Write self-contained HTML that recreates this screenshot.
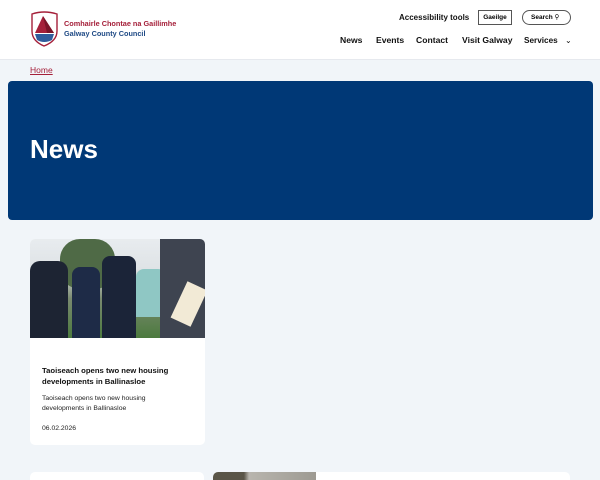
<!DOCTYPE html>
<html><head><meta charset="utf-8"><style>
*{margin:0;padding:0;box-sizing:border-box}
html,body{width:600px;height:480px;overflow:hidden}
body{background:#f1f5f9;font-family:"Liberation Sans",sans-serif;position:relative}
.hdr{position:absolute;left:0;top:0;width:600px;height:60px;background:#fff;border-bottom:1px solid #e6e9ee}
.abs{position:absolute;white-space:nowrap}
.nav{font-size:8.6px;color:#111;font-weight:bold;top:35px}
</style></head><body>
<div class="hdr">
<svg class="abs" style="left:30px;top:11px" width="29" height="36" viewBox="0 0 29 36">
<path d="M2 3 Q14 -1 27 3 L27 20 Q27 30 14 35 Q2 30 2 20Z" fill="#fff" stroke="#a5203a" stroke-width="1.4"/>
<path d="M5 22 L13 5 L24 22Z" fill="#a5203a"/>
<path d="M13 5 L24 22 L17 22Z" fill="#7a1428"/>
<path d="M5 23 L24 23 L22 29 Q14 33 7 29Z" fill="#2f5c9c"/>
</svg>
<div class="abs" style="left:64px;top:19px;font-size:7.3px;color:#a5203a;font-weight:bold">Comhairle Chontae na Gaillimhe</div>
<div class="abs" style="left:64px;top:29px;font-size:7.3px;color:#1f4a85;font-weight:bold">Galway County Council</div>
<div class="abs" style="left:399px;top:13px;font-size:8px;font-weight:bold;color:#111">Accessibility tools</div>
<div class="abs" style="left:478px;top:10px;width:34px;height:15px;border:1px solid #555;font-size:6.5px;font-weight:bold;text-align:center;line-height:13px">Gaeilge</div>
<div class="abs" style="left:522px;top:10px;width:49px;height:15px;border:1px solid #555;border-radius:8px;font-size:6.5px;font-weight:bold;line-height:13px;padding-left:8px">Search <span style="font-weight:normal">&#9906;</span></div>
<div class="abs nav" style="left:340px">News</div>
<div class="abs nav" style="left:376px">Events</div>
<div class="abs nav" style="left:416px">Contact</div>
<div class="abs nav" style="left:462px">Visit Galway</div>
<div class="abs nav" style="left:524px;font-size:8.2px">Services <span style="margin-left:5px;font-weight:normal">&#8964;</span></div>
</div>
<div class="abs" style="left:30px;top:65px;font-size:8.5px;color:#a5203a;text-decoration:underline">Home</div>
<div class="abs" style="left:8px;top:81px;width:585px;height:139px;background:#003876;border-radius:4px"></div>
<div class="abs" style="left:30px;top:134px;font-size:26px;font-weight:bold;color:#fff">News</div>
<div class="abs" style="left:30px;top:239px;width:175px;height:206px;background:#fff;border-radius:5px;overflow:hidden">
<div style="position:absolute;left:0;top:0;width:175px;height:99px;background:linear-gradient(#e8ecef 0,#dfe3e6 30%,#7a8a70 60%,#4c7a3e 100%)"></div>
<div style="position:absolute;left:30px;top:0;width:55px;height:50px;background:#4f6a46;border-radius:20px"></div>
<div style="position:absolute;left:0;top:22px;width:38px;height:77px;background:#1d2433;border-radius:10px 10px 0 0"></div>
<div style="position:absolute;left:42px;top:28px;width:28px;height:71px;background:#1e2b47;border-radius:8px 8px 0 0"></div>
<div style="position:absolute;left:72px;top:17px;width:34px;height:82px;background:#1b2438;border-radius:8px 8px 0 0"></div>
<div style="position:absolute;left:106px;top:30px;width:30px;height:48px;background:#8fc7c4;border-radius:8px 8px 0 0"></div>
<div style="position:absolute;left:130px;top:0;width:45px;height:99px;background:#3e4450"></div>
<div style="position:absolute;left:148px;top:45px;width:22px;height:40px;background:#f2ead6;transform:rotate(25deg)"></div>
<div style="position:absolute;left:12px;top:126px;font-size:7.7px;font-weight:bold;color:#111;line-height:11px">Taoiseach opens two new housing<br>developments in Ballinasloe</div>
<div style="position:absolute;left:12px;top:155px;font-size:6.8px;color:#222;line-height:10px">Taoiseach opens two new housing<br>developments in Ballinasloe</div>
<div style="position:absolute;left:12px;top:186px;font-size:6.8px;color:#222">06.02.2026</div>
</div>
<div class="abs" style="left:30px;top:472px;width:174px;height:8px;background:#fff;border-radius:5px 5px 0 0"></div>
<div class="abs" style="left:213px;top:472px;width:357px;height:8px;background:#fff;border-radius:5px 5px 0 0;overflow:hidden"><div style="width:103px;height:8px;background:linear-gradient(90deg,#5a5548 0,#5a5548 30%,#b8b5ae 35%,#9d9a92 100%)"></div></div>
</body></html>
